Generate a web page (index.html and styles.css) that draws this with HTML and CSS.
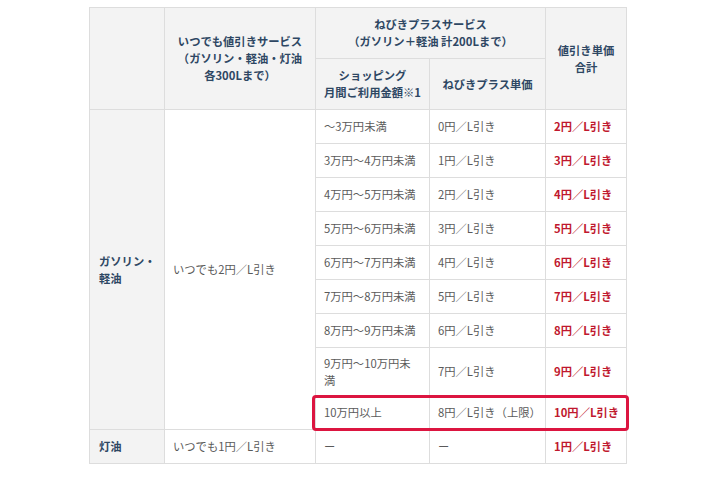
FILE: index.html
```html
<!DOCTYPE html>
<html lang="ja">
<head>
<meta charset="utf-8">
<title>値引き単価表</title>
<link rel="stylesheet" href="styles.css">
</head>
<body>
<div class="wrap">
  <table class="price">
    <colgroup>
      <col class="c1"><col class="c2"><col class="c3"><col class="c4"><col class="c5">
    </colgroup>
    <thead>
      <tr>
        <th rowspan="2"></th>
        <th rowspan="2">いつでも値引きサービス<br>（ガソリン・軽油・灯油<br>各300Lまで）</th>
        <th colspan="2">ねびきプラスサービス<br>（ガソリン＋軽油 計200Lまで）</th>
        <th rowspan="2">値引き単価<br>合計</th>
      </tr>
      <tr>
        <th>ショッピング<br>月間ご利用金額※1</th>
        <th>ねびきプラス単価</th>
      </tr>
    </thead>
    <tbody>
      <tr>
        <th class="fuel" rowspan="9">ガソリン・<br>軽油</th>
        <td rowspan="9">いつでも2円／L引き</td>
        <td>～3万円未満</td><td>0円／L引き</td><td class="total">2円／L引き</td>
      </tr>
      <tr><td>3万円～4万円未満</td><td>1円／L引き</td><td class="total">3円／L引き</td></tr>
      <tr><td>4万円～5万円未満</td><td>2円／L引き</td><td class="total">4円／L引き</td></tr>
      <tr><td>5万円～6万円未満</td><td>3円／L引き</td><td class="total">5円／L引き</td></tr>
      <tr><td>6万円～7万円未満</td><td>4円／L引き</td><td class="total">6円／L引き</td></tr>
      <tr><td>7万円～8万円未満</td><td>5円／L引き</td><td class="total">7円／L引き</td></tr>
      <tr><td>8万円～9万円未満</td><td>6円／L引き</td><td class="total">8円／L引き</td></tr>
      <tr><td>9万円～10万円未<br>満</td><td>7円／L引き</td><td class="total">9円／L引き</td></tr>
      <tr><td>10万円以上</td><td>8円／L引き（上限）</td><td class="total">10円／L引き</td></tr>
      <tr>
        <th class="fuel">灯油</th>
        <td>いつでも1円／L引き</td>
        <td>ー</td><td>ー</td><td class="total">1円／L引き</td>
      </tr>
    </tbody>
  </table>
  <div class="highlight"></div>
</div>
</body>
</html>
```

FILE: styles.css
```css
html, body {
  margin: 0;
  padding: 0;
  background: #ffffff;
}

body {
  font-family: "Noto Sans CJK JP", "Noto Sans", sans-serif;
  font-size: 11.3px;
  line-height: 17px;
  color: #5a5a5a;
}

.wrap {
  position: relative;
  width: 537px;
  margin: 7px auto 0;
}

.price {
  width: 537px;
  table-layout: fixed;
  border-collapse: collapse;
  border: 1px solid #e2e2e2;
}

.c1 { width: 75px; }
.c2 { width: 151px; }
.c3 { width: 114px; }
.c4 { width: 116px; }
.c5 { width: 81px; }

.price th,
.price td {
  border: 1px solid #dddddd;
  padding: 6.5px 8px;
  vertical-align: middle;
}

.price thead th {
  background: #f3f3f3;
  color: #2e4763;
  font-weight: bold;
  text-align: center;
  padding: 8px 4px;
}

.price tbody tr {
  height: 34px;
}

.price td {
  text-align: left;
  white-space: nowrap;
}

.price th.fuel {
  background: #f3f3f3;
  color: #2e4763;
  font-weight: bold;
  text-align: left;
  padding-left: 9px;
}

.price td.total {
  color: #c0182e;
  font-weight: bold;
}

.highlight {
  position: absolute;
  left: 223px;
  top: 388px;
  width: 317px;
  height: 36px;
  box-sizing: border-box;
  border: 3px solid #dc1540;
  border-radius: 4px;
  pointer-events: none;
}
```
